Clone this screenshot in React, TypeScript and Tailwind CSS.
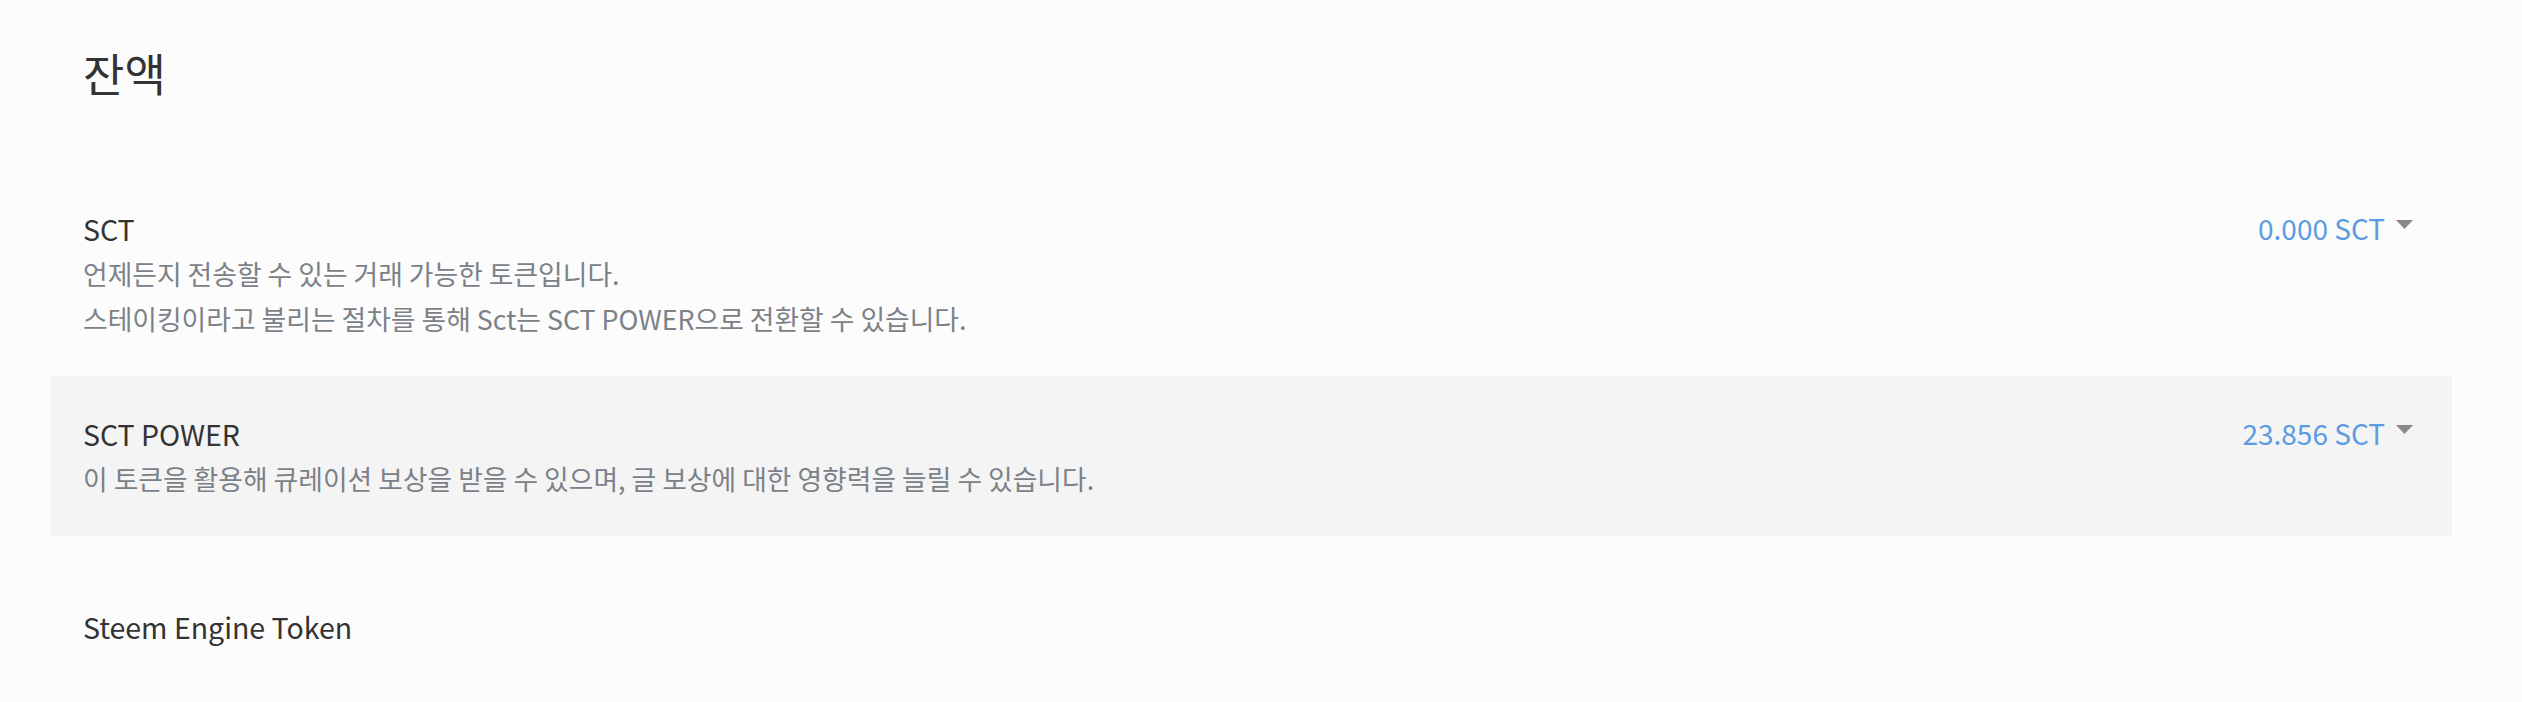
const rows = [
  {
    name: "SCT",
    lines: [
      "언제든지 전송할 수 있는 거래 가능한 토큰입니다.",
      "스테이킹이라고 불리는 절차를 통해 Sct는 SCT POWER으로 전환할 수 있습니다.",
    ],
    amount: "0.000 SCT",
    shaded: false,
  },
  {
    name: "SCT POWER",
    lines: ["이 토큰을 활용해 큐레이션 보상을 받을 수 있으며, 글 보상에 대한 영향력을 늘릴 수 있습니다."],
    amount: "23.856 SCT",
    shaded: true,
  },
];

function Caret() {
  return (
    <svg width="17" height="9" viewBox="0 0 17 9" className="ml-[11px] mt-[-8px]">
      <path d="M0 0 H17 L8.5 9 Z" fill="#888888" />
    </svg>
  );
}

export default function App() {
  return (
    <div
      className="min-h-[702px] bg-[#fcfcfc] px-[51px] text-[#333]"
      style={{ fontFamily: '"Noto Sans CJK KR", "Noto Sans", sans-serif' }}
    >
      <h2 className="pt-[38px] pl-[32px] text-[45px] leading-[70px] font-normal">잔액</h2>
      <div className="mt-[63px] w-[2401px]">
        {rows.map((row) => (
          <div
            key={row.name}
            className={`flex items-start justify-between py-[35px] pl-[32px] pr-[39px] ${row.shaded ? "bg-[#f4f4f4]" : ""}`}
          >
            <div>
              <div className="text-[28.5px] leading-[45px]">{row.name}</div>
              {row.lines.map((l) => (
                <div key={l} className="text-[26.8px] leading-[45px] text-[#7b8187]">
                  {l}
                </div>
              ))}
            </div>
            <div className="flex items-center text-[28px] leading-[45px] text-[#5b9be3]">
              <span>{row.amount}</span>
              <Caret />
            </div>
          </div>
        ))}
        <div className="pt-[68px] pl-[32px] text-[28.5px] leading-[45px]">Steem Engine Token</div>
      </div>
    </div>
  );
}
